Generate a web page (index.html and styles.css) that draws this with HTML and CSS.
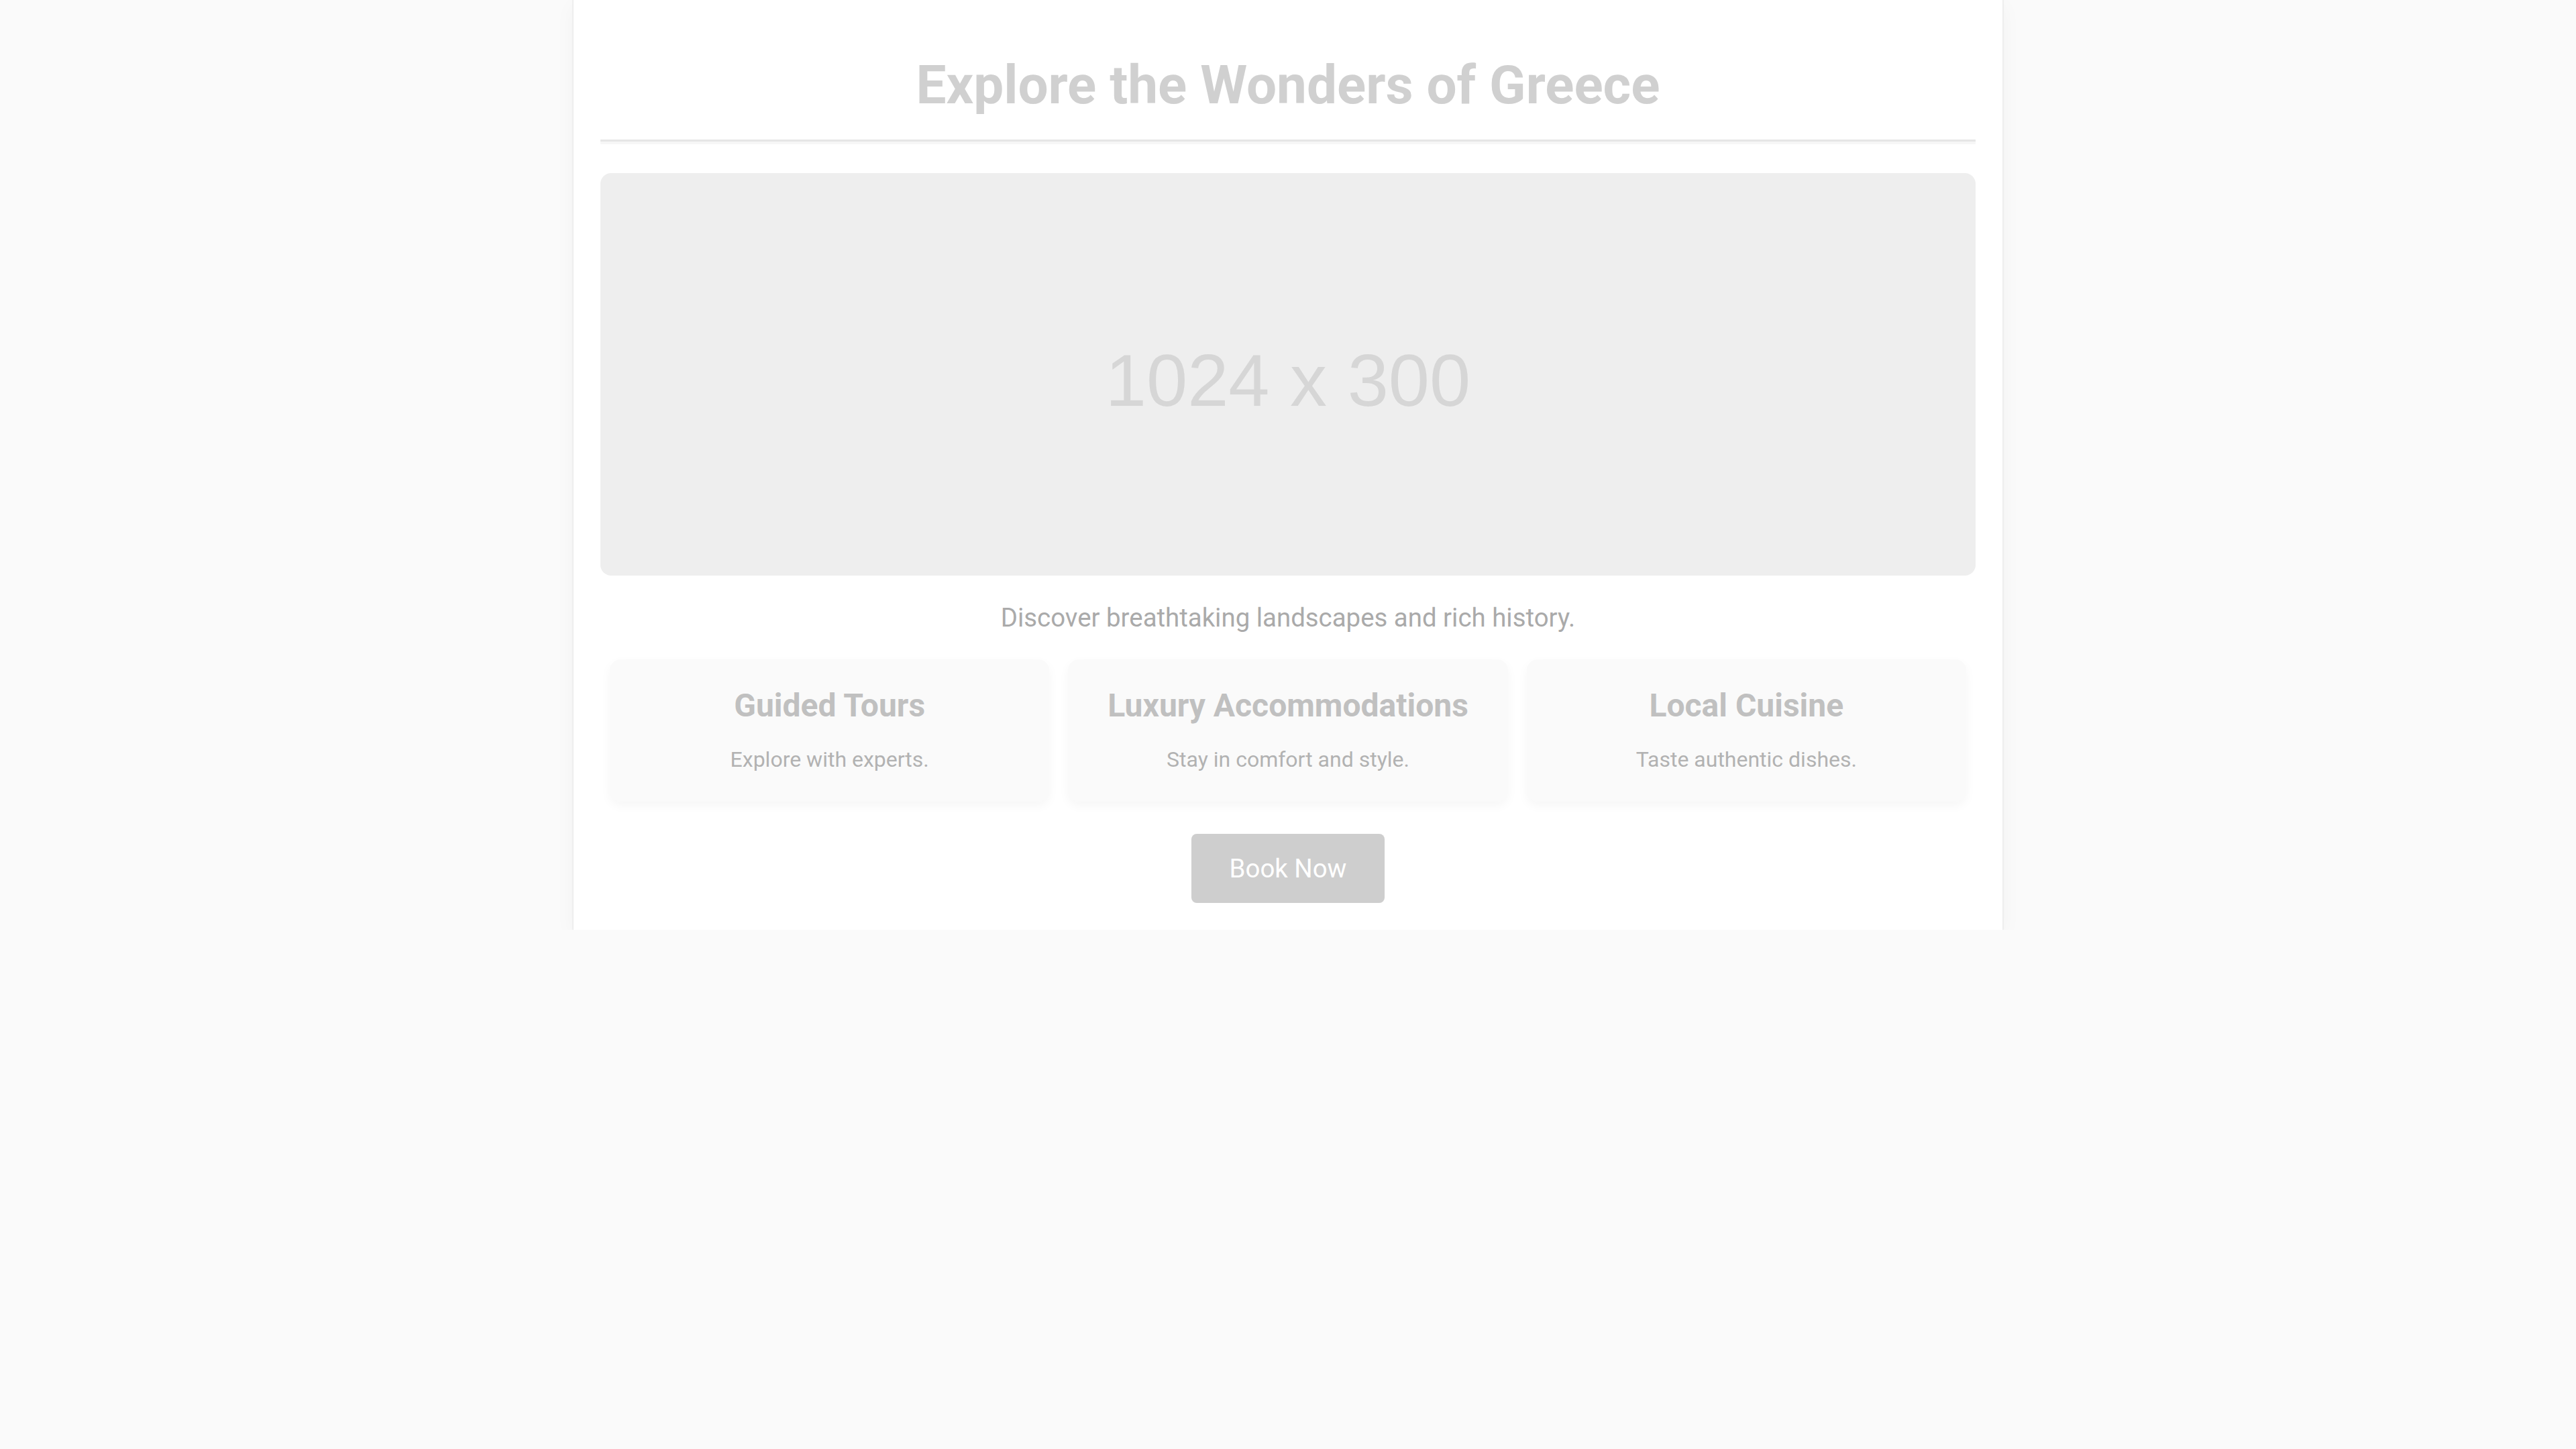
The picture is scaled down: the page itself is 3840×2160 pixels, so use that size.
FILE: index.html
```html
<!DOCTYPE html>
<html lang="en">
<head>
<meta charset="utf-8">
<title>Explore the Wonders of Greece</title>
<link rel="stylesheet" href="styles.css">
</head>
<body>
<main class="page">
  <header class="header">
    <h1 class="title">Explore the Wonders of Greece</h1>
  </header>
  <div class="hero"><span class="hero-label">1024 x 300</span></div>
  <p class="tagline">Discover breathtaking landscapes and rich history.</p>
  <section class="cards">
    <div class="card">
      <h3 class="card-title">Guided Tours</h3>
      <p class="card-text">Explore with experts.</p>
    </div>
    <div class="card">
      <h3 class="card-title">Luxury Accommodations</h3>
      <p class="card-text">Stay in comfort and style.</p>
    </div>
    <div class="card">
      <h3 class="card-title">Local Cuisine</h3>
      <p class="card-text">Taste authentic dishes.</p>
    </div>
  </section>
  <div class="actions">
    <button class="book-btn" type="button">Book Now</button>
  </div>
</main>
</body>
</html>
```
FILE: styles.css
```css
html, body {
  margin: 0;
  padding: 0;
}
body {
  background: #fafafa;
  font-family: Roboto, "Liberation Sans", Arial, sans-serif;
}
.page {
  box-sizing: border-box;
  width: 2130px;
  margin: 0 auto;
  padding: 40px;
  background: #ffffff;
  box-shadow: 0 0 0 2px #eeeeee, 0 8px 30px rgba(0, 0, 0, 0.04);
}
.header {
  text-align: center;
  padding: 40px 0 34px;
  border-bottom: 3px solid #e6e6e6;
  box-shadow: 0 4px 0 #f6f6f6;
  margin-bottom: 47px;
}
.title {
  margin: 0;
  font-size: 80px;
  font-weight: 700;
  color: #d0d0d0;
  line-height: normal;
}
.hero {
  height: 600px;
  background: #eeeeee;
  border-radius: 16px;
  display: flex;
  align-items: center;
  justify-content: center;
}
.hero-label {
  font-family: "Liberation Sans", Arial, sans-serif;
  font-size: 110px;
  color: #d6d6d6;
  transform: translateY(8px);
}
.tagline {
  margin: 40px 0 40px;
  text-align: center;
  font-size: 38.4px;
  color: #aaaaaa;
}
.cards {
  display: flex;
  gap: 28px;
  padding: 0 14px;
}
.card {
  flex: 1;
  background: #fafafa;
  border-radius: 16px;
  padding: 40px 20px;
  text-align: center;
  box-shadow: 0 6px 16px rgba(0, 0, 0, 0.04);
}
.card-title {
  margin: 0 0 30px;
  font-size: 48px;
  font-weight: 700;
  color: #c0c0c0;
}
.card-text {
  margin: 0;
  font-size: 32px;
  line-height: 1.4;
  color: #b2b2b2;
}
.actions {
  display: flex;
  justify-content: center;
  margin-top: 48px;
}
.book-btn {
  font-family: Roboto, "Liberation Sans", Arial, sans-serif;
  font-size: 38.4px;
  color: #ffffff;
  background: #cecece;
  border: none;
  border-radius: 8px;
  padding: 29px 57px;
  line-height: normal;
}
```
